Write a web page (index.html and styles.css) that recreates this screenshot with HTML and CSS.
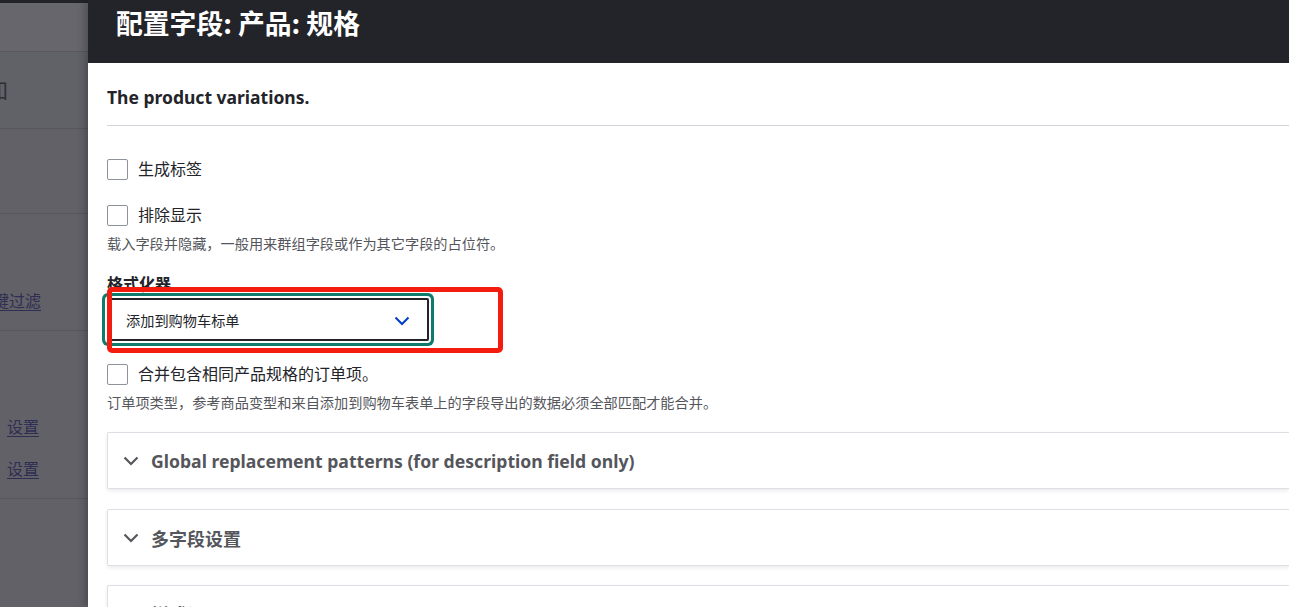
FILE: index.html
```html
<!DOCTYPE html>
<html lang="zh-CN">
<head>
<meta charset="utf-8">
<title>配置字段: 产品: 规格</title>
<link rel="stylesheet" href="styles.css">
</head>
<body>
<div class="page">
  <aside class="backdrop">
    <div class="bd-topbar"></div>
    <div class="bd-row bd-r1"></div>
    <div class="bd-row bd-r2"><span class="bd-cut">加</span></div>
    <div class="bd-row bd-r3"></div>
    <div class="bd-row bd-r4"><a class="bd-link bd-cut2" href="#">关键过滤</a></div>
    <div class="bd-row bd-r5"><a class="bd-link" href="#">设置</a><a class="bd-link" href="#">设置</a></div>
    <div class="bd-row bd-r6"></div>
  </aside>
  <div class="dialog">
    <header class="dlg-head"><h1 class="dlg-title">配置字段: 产品: 规格</h1></header>
    <div class="dlg-body">
      <p class="help">The product variations.</p>
      <hr class="sep">

      <div class="check check-1">
        <span class="box"></span><span class="check-label">生成标签</span>
      </div>
      <div class="check check-2">
        <span class="box"></span><span class="check-label">排除显示</span>
      </div>
      <div class="desc">载入字段并隐藏，一般用来群组字段或作为其它字段的占位符。</div>

      <div class="field">
        <div class="field-label">格式化器</div>
        <div class="select">
          <span class="select-text">添加到购物车标单</span>
          <svg class="select-chev" width="16" height="10" viewBox="0 0 16 10"><path d="M1.5 1.5 L8 8 L14.5 1.5" fill="none" stroke="#003ecc" stroke-width="2"/></svg>
        </div>
        <div class="annot"></div>
      </div>

      <div class="check check-3">
        <span class="box"></span><span class="check-label">合并包含相同产品规格的订单项。</span>
      </div>
      <div class="desc">订单项类型，参考商品变型和来自添加到购物车表单上的字段导出的数据必须全部匹配才能合并。</div>

      <div class="card card-1">
        <svg class="card-chev" width="16" height="10" viewBox="0 0 16 10"><path d="M1.5 1.5 L8 8 L14.5 1.5" fill="none" stroke="#55565b" stroke-width="2.2"/></svg>
        <span class="card-title card-title-latin">Global replacement patterns (for description field only)</span>
      </div>
      <div class="card">
        <svg class="card-chev" width="16" height="10" viewBox="0 0 16 10"><path d="M1.5 1.5 L8 8 L14.5 1.5" fill="none" stroke="#55565b" stroke-width="2.2"/></svg>
        <span class="card-title">多字段设置</span>
      </div>
      <div class="card card-3">
        <svg class="card-chev" width="16" height="10" viewBox="0 0 16 10"><path d="M1.5 1.5 L8 8 L14.5 1.5" fill="none" stroke="#55565b" stroke-width="2.2"/></svg>
        <span class="card-title">样式设置</span>
      </div>
    </div>
  </div>
</div>
</body>
</html>
```

FILE: styles.css
```css
html, body {
  margin: 0;
  padding: 0;
  height: 100%;
  overflow: hidden;
  background: #616067;
}
body {
  font-family: "Noto Sans", "Noto Sans CJK SC", sans-serif;
  color: #232429;
}
.page {
  display: flex;
  height: 607px;
  overflow: hidden;
}

/* dimmed page behind the dialog */
.backdrop {
  width: 88px;
  flex: none;
  background: #626168;
  overflow: hidden;
  display: flex;
  flex-direction: column;
}
.bd-topbar {
  height: 3px;
  background: #232429;
}
.bd-row {
  border-bottom: 1px solid #57575d;
  position: relative;
  flex: none;
}
.bd-r1 { height: 48px; background: #67666c; }
.bd-r2 { height: 76px; background: #616168; }
.bd-r3 { height: 84px; }
.bd-r4 { height: 116px; }
.bd-r5 { height: 167px; display: flex; flex-direction: column; gap: 18px; }
.bd-r6 { flex: 1; border-bottom: 0; }
.bd-cut {
  display: block;
  margin-left: -14px;
  margin-top: 24px;
  font-size: 22px;
  line-height: 24px;
  color: #2f2f36;
  font-family: "Noto Sans CJK SC", sans-serif;
}
.bd-link {
  color: #2e2d52;
  font-size: 16px;
  line-height: 24px;
  font-family: "Noto Sans CJK SC", sans-serif;
  text-decoration: underline;
  text-underline-offset: 3px;
}
.bd-cut2 {
  display: block;
  margin-left: -23px;
  margin-top: 74px;
  white-space: nowrap;
}
.bd-r5 .bd-link {
  display: block;
  margin-left: 7px;
}
.bd-r5 .bd-link:first-child { margin-top: 83px; }

/* dialog */
.dialog {
  flex: 1;
  background: #fff;
  box-shadow: -3px 0 8px rgba(0, 0, 0, 0.25);
  display: flex;
  flex-direction: column;
  position: relative;
}
.dlg-head {
  height: 63px;
  background: #232429;
  display: flex;
  align-items: center;
  padding-left: 28px;
  flex: none;
}
.dlg-title {
  margin: 0;
  color: #fff;
  font-family: "Noto Sans CJK SC", sans-serif;
  font-size: 26.8px;
  font-weight: 700;
  line-height: 32px;
  margin-top: -17px;
}
.dlg-body {
  padding: 24px 0 0 19px;
}
.help {
  margin: 0;
  font-size: 17.5px;
  font-weight: 700;
  line-height: 20px;
}
.sep {
  margin: 18px 0 0;
  border: 0;
  border-top: 1px solid #d3d4d9;
  height: 0;
}

.check {
  display: flex;
  align-items: center;
  gap: 10px;
  height: 21px;
}
.check-1 { margin-top: 33px; }
.check-2 { margin-top: 25px; }
.check-3 { margin-top: 23px; }
.box {
  width: 19px;
  height: 19px;
  border: 1px solid #8e929c;
  border-radius: 2px;
  background: #fff;
  flex: none;
}
.check-label {
  font-size: 16px;
  line-height: 21px;
}
.desc {
  margin-top: 8px;
  font-size: 14.2px;
  line-height: 20px;
  color: #55565b;
}

.field {
  margin-top: 20px;
  position: relative;
}
.field-label {
  font-size: 16px;
  font-weight: 700;
  line-height: 20px;
}
.select {
  margin-top: 4px;
  height: 39px;
  border: 2px solid #232429;
  border-radius: 2px;
  box-shadow: 0 0 0 2px #fff, 0 0 0 5px #0e7b6c;
  display: flex;
  align-items: center;
  justify-content: space-between;
  padding: 0 17px 0 17px;
  box-sizing: content-box;
  width: 284px;
}
.select-text {
  font-size: 14.2px;
  color: #232429;
}
.select-chev { display: block; margin-top: 2px; }
.annot {
  position: absolute;
  left: 0;
  top: 13px;
  width: 386px;
  height: 56px;
  border: 5px solid #f41c0f;
  border-radius: 5px;
}

.card {
  margin-top: 20px;
  height: 55px;
  border: 1px solid #dedfe4;
  border-right: 0;
  border-radius: 2px 0 0 2px;
  box-shadow: 0 2px 4px rgba(0, 0, 0, 0.08);
  display: flex;
  align-items: center;
  padding-left: 15px;
  gap: 12px;
}
.card-1 { margin-top: 19px; }
.card-3 { margin-top: 19px; }
.card-title {
  font-size: 18px;
  font-weight: 700;
  color: #55565b;
  font-family: "Noto Sans CJK SC", sans-serif;
}
.card-title-latin {
  font-family: "Noto Sans", sans-serif;
  font-size: 17.6px;
}
.card-chev { display: block; flex: none; }
```
